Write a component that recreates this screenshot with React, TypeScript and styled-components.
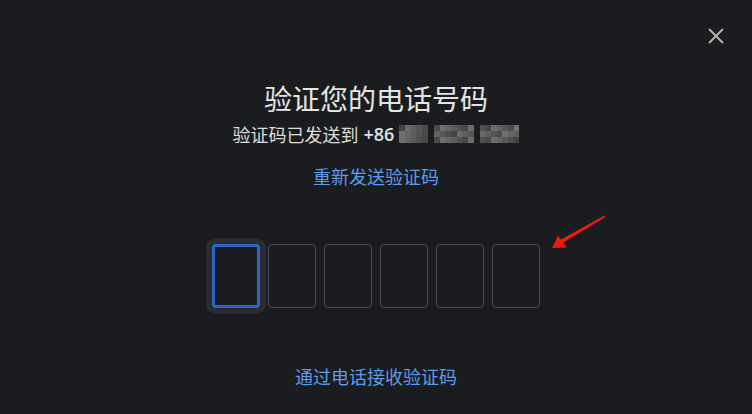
import React from 'react';
import styled, {createGlobalStyle} from 'styled-components';

const GlobalStyle = createGlobalStyle`
	html, body {
		margin: 0;
		padding: 0;
		background: #1b1c1f;
	}
	body {
		font-family: 'Noto Sans CJK SC', 'Noto Sans', sans-serif;
	}
`;

const Dialog = styled.div`
	position: relative;
	width: 752px;
	height: 414px;
	background: #1b1c1f;
	display: flex;
	flex-direction: column;
	align-items: center;
	overflow: hidden;
`;

const CloseButton = styled.button`
	position: absolute;
	top: 25px;
	right: 25px;
	width: 22px;
	height: 22px;
	padding: 0;
	border: none;
	background: transparent;
	display: flex;
	align-items: center;
	justify-content: center;
	cursor: pointer;
`;

const Title = styled.h1`
	margin: 81px 0 0;
	font-size: 28px;
	line-height: 34px;
	font-weight: 400;
	color: #e4e4e4;
`;

const Subtitle = styled.div`
	margin-top: 7px;
	display: flex;
	align-items: center;
	gap: 5px;
	font-size: 18px;
	line-height: 24px;
	color: #dcdcdc;
`;

const Code = styled.span`
	font-family: 'Noto Sans', 'Noto Sans CJK SC', sans-serif;
	font-weight: 600;
	font-size: 18px;
`;

const Mosaic = styled.div`
	display: flex;
	gap: 6px;
`;

const MosaicGroup = styled.div<{$cols: number}>`
	display: grid;
	grid-template-columns: repeat(${p => p.$cols}, 5.7px);
	grid-auto-rows: 6px;
`;

const Link = styled.a<{$top: number}>`
	margin-top: ${p => p.$top}px;
	font-size: 18px;
	line-height: 24px;
	color: #5a9bec;
	text-decoration: none;
	cursor: pointer;
`;

const Boxes = styled.div`
	margin-top: 56px;
	display: flex;
	gap: 8px;
`;

const Box = styled.div<{$active?: boolean}>`
	box-sizing: border-box;
	width: 48px;
	height: 64px;
	border-radius: 4px;
	border: ${p => (p.$active ? '3px solid #2e63c8' : '1px solid #4a4b4f')};
	box-shadow: ${p => (p.$active ? '0 0 0 6px #2a2c30' : 'none')};
	background: #1b1c1f;
`;

const Arrow = styled.svg`
	position: absolute;
	left: 0;
	top: 0;
	pointer-events: none;
`;

const groups = [5, 7, 7];

const shade = (g: number, i: number) => {
	const v = 68 + ((i * 37 + g * 53) % 47);
	return `rgb(${v}, ${v}, ${v})`;
};

const App = () => (
	<Dialog>
		<GlobalStyle />
		<CloseButton aria-label="关闭">
			<svg width="16" height="16" viewBox="0 0 16 16">
				<path d="M1.5 1.5 L14.5 14.5 M14.5 1.5 L1.5 14.5" stroke="#b8b8b3" strokeWidth="1.8" strokeLinecap="round" />
			</svg>
		</CloseButton>
		<Title>验证您的电话号码</Title>
		<Subtitle>
			<span>验证码已发送到</span>
			<Code>+86</Code>
			<Mosaic>
				{groups.map((cols, g) => (
					<MosaicGroup key={g} $cols={cols}>
						{Array.from({length: cols * 3}).map((_, i) => (
							<span key={i} style={{background: shade(g, i)}} />
						))}
					</MosaicGroup>
				))}
			</Mosaic>
		</Subtitle>
		<Link $top={18}>重新发送验证码</Link>
		<Boxes>
			{Array.from({length: 6}).map((_, i) => (
				<Box key={i} $active={i === 0} />
			))}
		</Boxes>
		<Link $top={56}>通过电话接收验证码</Link>
		<Arrow width="752" height="414" viewBox="0 0 752 414">
			<polygon
				points="552,248 558,235.5 561,239.5 604.5,215.5 605.5,217 563.5,242.5 566.5,247.5"
				fill="#f0190f"
			/>
		</Arrow>
	</Dialog>
);

export default App;
